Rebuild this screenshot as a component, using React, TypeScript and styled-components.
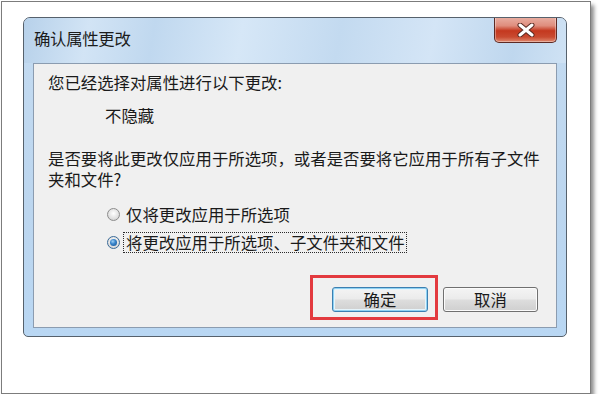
import React from "react";
import styled, { createGlobalStyle } from "styled-components";

const Global = createGlobalStyle`
  html, body { margin: 0; padding: 0; background: #ffffff; }
  body { font-family: "Noto Sans CJK SC", "Noto Sans", sans-serif; }
`;

const FONT = `"Noto Sans CJK SC", "Noto Sans", sans-serif`;

const Page = styled.div`
  box-sizing: border-box;
  margin: 1px 0 0 1px;
  width: 590px;
  height: 393px;
  border: 1px solid #7c7c7c;
  background: #ffffff;
  box-shadow: 3px 4px 4px rgba(0, 0, 0, 0.45);
  padding: 15px 0 0 21px;
`;

const Dialog = styled.div`
  box-sizing: border-box;
  width: 544px;
  height: 320px;
  border: 1px solid #56616c;
  border-radius: 7px 7px 5px 5px;
  background: linear-gradient(180deg, #c4dbf1 0%, #bcd6ef 60%, #b9d7f3 100%);
  display: flex;
  flex-direction: column;
  padding: 0 9px 8px 9px;
  overflow: hidden;
`;

const TitleBar = styled.div`
  height: 45px;
  margin: 0 -9px;
  padding: 0 9px 0 10px;
  display: flex;
  align-items: flex-start;
  justify-content: space-between;
  background: linear-gradient(
    100deg,
    #b7d1ea 0%,
    #d2e4f5 12%,
    #c0d8ef 24%,
    #d6e7f7 40%,
    #c3daf0 58%,
    #d4e5f6 75%,
    #bfd7ee 90%,
    #cfe2f4 100%
  );
`;

const Title = styled.div`
  font-family: ${FONT};
  font-size: 16.4px;
  line-height: 22px;
  color: #1c1c1c;
  margin-top: 9px;
  letter-spacing: -0.3px;
`;

const CloseButton = styled.div`
  box-sizing: border-box;
  width: 63px;
  height: 26px;
  margin-top: -1px;
  border: 1px solid #5d2a24;
  border-top: none;
  border-radius: 0 0 5px 5px;
  background: linear-gradient(
    180deg,
    #e9b0a4 0%,
    #df8d7d 35%,
    #c4381f 55%,
    #c94a30 80%,
    #e08a70 100%
  );
  display: flex;
  align-items: center;
  justify-content: center;
  box-shadow: inset 0 0 0 1px rgba(255, 255, 255, 0.35);
`;

const Panel = styled.div`
  flex: 1;
  box-sizing: border-box;
  border: 1px solid #8b9cb0;
  background: #f0f0f0;
  display: flex;
  flex-direction: column;
  padding: 8px 18px 0 14px;
  font-family: ${FONT};
  font-size: 16.4px;
  line-height: 21px;
  color: #1a1a1a;
`;

const Line = styled.div<{ $indent?: number; $gap?: number }>`
  margin-left: ${(p) => p.$indent ?? 0}px;
  margin-top: ${(p) => p.$gap ?? 0}px;
  white-space: nowrap;
`;

const Paragraph = styled.div`
  margin-top: 22px;
  width: 492px;
`;

const RadioRow = styled.div<{ $gap: number }>`
  display: flex;
  align-items: center;
  margin-left: 59px;
  margin-top: ${(p) => p.$gap}px;
  height: 21px;
  gap: 3px;
`;

const RadioCircle = styled.div<{ $checked?: boolean }>`
  box-sizing: border-box;
  width: 13px;
  height: 13px;
  border-radius: 50%;
  border: 1px solid ${(p) => (p.$checked ? "#3a6b98" : "#8c8c8c")};
  background: radial-gradient(circle at 50% 40%, #ffffff 0%, #e0e0e0 60%, #c8c8c8 100%);
  display: flex;
  align-items: center;
  justify-content: center;
  &::after {
    content: "";
    display: ${(p) => (p.$checked ? "block" : "none")};
    width: 7px;
    height: 7px;
    border-radius: 50%;
    background: radial-gradient(circle at 40% 35%, #9fd0f5 0%, #3a86cc 40%, #15508f 100%);
  }
`;

const RadioLabel = styled.span<{ $focused?: boolean }>`
  padding: 0 1px 0 2px;
  border: 1px dotted ${(p) => (p.$focused ? "#2a2a2a" : "transparent")};
  line-height: 19px;
`;

const ButtonRow = styled.div`
  display: flex;
  justify-content: flex-end;
  gap: 15px;
  margin-top: auto;
  margin-bottom: 15px;
`;

const ButtonWrap = styled.div`
  position: relative;
`;

const Button = styled.div<{ $default?: boolean; $w: number }>`
  box-sizing: border-box;
  width: ${(p) => p.$w}px;
  height: 25px;
  border: 1px solid ${(p) => (p.$default ? "#3c7fb1" : "#707070")};
  border-radius: 3px;
  background: linear-gradient(180deg, #f4f4f4 0%, #ebebeb 48%, #dddddd 52%, #cfcfcf 100%);
  box-shadow: ${(p) =>
    p.$default ? "inset 0 0 0 1px #8fd2f3, inset 0 0 0 2px #e6f4fb" : "inset 0 0 0 1px #fbfbfb"};
  display: flex;
  align-items: center;
  justify-content: center;
  font-family: ${FONT};
  font-size: 16.4px;
  color: #1a1a1a;
`;

const Highlight = styled.div`
  position: absolute;
  left: -22px;
  top: -12px;
  width: 128px;
  height: 45px;
  box-sizing: border-box;
  border: 3px solid #e33a3f;
  pointer-events: none;
`;

const CloseIcon = () => (
  <svg width="18" height="14" viewBox="0 0 18 14">
    <path
      d="M3 2 L15 12 M15 2 L3 12"
      stroke="#5a2a22"
      strokeWidth="5"
      strokeLinecap="round"
    />
    <path
      d="M3 2 L15 12 M15 2 L3 12"
      stroke="#ffffff"
      strokeWidth="3"
      strokeLinecap="round"
    />
  </svg>
);

export default function App() {
  return (
    <>
      <Global />
      <Page>
        <Dialog>
          <TitleBar>
            <Title>确认属性更改</Title>
            <CloseButton>
              <CloseIcon />
            </CloseButton>
          </TitleBar>
          <Panel>
            <Line>您已经选择对属性进行以下更改:</Line>
            <Line $indent={57} $gap={12}>
              不隐藏
            </Line>
            <Paragraph>
              是否要将此更改仅应用于所选项，或者是否要将它应用于所有子文件夹和文件?
            </Paragraph>
            <RadioRow $gap={14}>
              <RadioCircle />
              <RadioLabel>仅将更改应用于所选项</RadioLabel>
            </RadioRow>
            <RadioRow $gap={7}>
              <RadioCircle $checked />
              <RadioLabel $focused>将更改应用于所选项、子文件夹和文件</RadioLabel>
            </RadioRow>
            <ButtonRow>
              <ButtonWrap>
                <Button $default $w={96}>
                  确定
                </Button>
                <Highlight />
              </ButtonWrap>
              <Button $w={95}>取消</Button>
            </ButtonRow>
          </Panel>
        </Dialog>
      </Page>
    </>
  );
}
